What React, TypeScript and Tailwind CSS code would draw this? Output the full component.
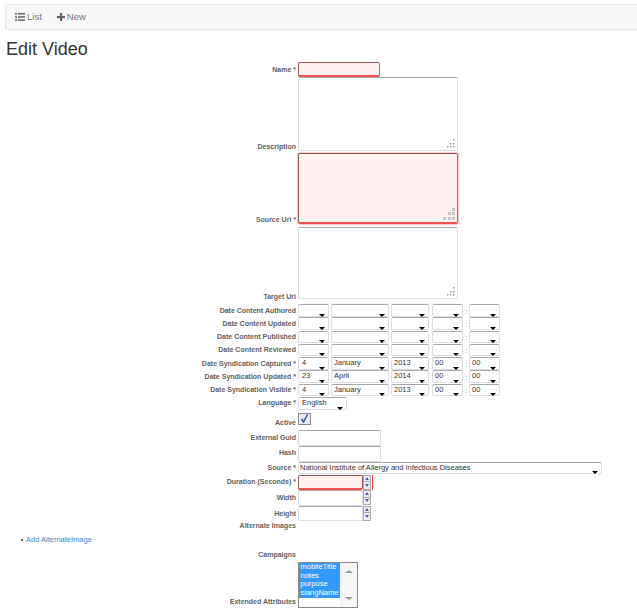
import { ReactNode } from "react";

const days = ["", "", "", "", "4", "23", "4"];
const months = ["", "", "", "", "January", "April", "January"];
const years = ["", "", "", "", "2013", "2014", "2013"];

const dateRows = [
  { label: "Date Content Authored", i: 0 },
  { label: "Date Content Updated", i: 1 },
  { label: "Date Content Published", i: 2 },
  { label: "Date Content Reviewed", i: 3 },
  { label: "Date Syndication Captured *", i: 4 },
  { label: "Date Syndication Updated *", i: 5 },
  { label: "Date Syndication Visible *", i: 6 },
];

// label column is fixed, field starts at x=298
const Row = ({
  label,
  className,
  labelClass,
  children,
}: {
  label: string;
  className?: string;
  labelClass?: string;
  children: ReactNode;
}) => (
  <div className={`flex items-end ${className ?? ""}`}>
    <label
      className={`w-[296.5px] shrink-0 pr-[0.5px] text-right text-[7px] leading-[10px] font-bold text-[#5f5f5f] ${
        labelClass ?? "pb-[1px]"
      }`}
    >
      {label}
    </label>
    <div className="ml-[1.5px] flex items-end">{children}</div>
  </div>
);

const FakeSelect = ({ value, className }: { value?: string; className: string }) => (
  <div
    className={`relative h-[12.5px] rounded-[2px] border border-[#dcdce4] border-t-[#a9a9a9] bg-white text-[7.5px] leading-[9px] text-[#333] ${className}`}
  >
    {value}
    <span className="absolute right-[3px] bottom-[-1px] h-0 w-0 border-x-[3.5px] border-t-[3px] border-x-transparent border-t-black" />
  </div>
);

const TextArea = ({ invalid, className }: { invalid?: boolean; className: string }) => (
  <div
    className={`relative w-[160px] rounded-[2px] border ${
      invalid
        ? "border-[#8f5a5a] border-r-[#f05050] border-b-2 border-b-[#f05050] bg-[#fff2f0] shadow-[0_0_1px_1px_#fbc4c4]"
        : "border-[#dcdce4] border-t-[#a9a9a9] bg-white"
    } ${className}`}
  >
    {invalid ? (
      <svg className="absolute right-[1px] bottom-[1px]" width="14" height="14" viewBox="0 0 14 14">
        <g fill="#c8c8c8">
          <rect x="10" y="1" width="3" height="3" />
          <rect x="6" y="5" width="3" height="3" />
          <rect x="10" y="5" width="3" height="3" />
          <rect x="1" y="10" width="3" height="3" />
          <rect x="6" y="10" width="3" height="3" />
          <rect x="10" y="10" width="3" height="3" />
        </g>
      </svg>
    ) : (
      <svg className="absolute right-[1px] bottom-[1px]" width="11" height="11" viewBox="0 0 11 11">
        <g fill="#9a9a9a">
          <rect x="8" y="1" width="1.5" height="1.5" />
          <rect x="5" y="5" width="1.5" height="1.5" />
          <rect x="8" y="5" width="1.5" height="1.5" />
          <rect x="2" y="8" width="1.5" height="1.5" />
          <rect x="5" y="8" width="1.5" height="1.5" />
          <rect x="8" y="8" width="1.5" height="1.5" />
        </g>
      </svg>
    )}
  </div>
);

const Spinner = () => (
  <div className="flex h-[15px] w-[8px] flex-col border border-[#a9a9a9] bg-[#eeeef4]">
    <span className="flex h-1/2 items-center justify-center border-b border-[#a9a9a9]">
      <span className="h-0 w-0 border-x-[2.5px] border-b-[3px] border-x-transparent border-b-[#5060a8]" />
    </span>
    <span className="flex h-1/2 items-center justify-center">
      <span className="h-0 w-0 border-x-[2.5px] border-t-[3px] border-x-transparent border-t-[#5060a8]" />
    </span>
  </div>
);

const NumberField = ({ invalid }: { invalid?: boolean }) => (
  <div className="flex items-start">
    <div
      className={`h-[15.5px] w-[65px] rounded-[2px] border ${
        invalid
          ? "border-[#8f5a5a] border-b-2 border-b-[#f05050] bg-[#fff2f0]"
          : "border-[#dcdce4] border-t-[#a9a9a9] bg-white"
      }`}
    />
    <Spinner />
    {invalid && <span className="ml-[1px] h-[15px] w-[1px] bg-[#f05050]" />}
  </div>
);

export default function App() {
  return (
    <div className="h-[608px] w-[637px] overflow-hidden bg-white font-['Liberation_Sans',Arial,sans-serif]">
      {/* Nav bar */}
      <div className="pt-1 pl-[5px]">
        <nav className="flex h-[26px] items-center rounded-l-[3px] border border-r-0 border-[#e7e7e7] bg-[#f8f8f8] pl-[9px] text-[9.5px] text-[#777]">
          <a className="flex items-center gap-[2px]">
            <svg width="10" height="8" viewBox="0 0 10 8" fill="#666">
              <rect x="0" y="0" width="2" height="1.5" />
              <rect x="3" y="0" width="7" height="1.5" />
              <rect x="0" y="3.2" width="2" height="1.5" />
              <rect x="3" y="3.2" width="7" height="1.5" />
              <rect x="0" y="6.4" width="2" height="1.5" />
              <rect x="3" y="6.4" width="7" height="1.5" />
            </svg>
            List
          </a>
          <a className="ml-[15px] flex items-center gap-[2px]">
            <svg width="8" height="8" viewBox="0 0 8 8" fill="#666">
              <rect x="3" y="0" width="2.2" height="8" />
              <rect x="0" y="3" width="8" height="2.2" />
            </svg>
            New
          </a>
        </nav>
      </div>

      <h1 className="mt-[9px] ml-[6px] text-[18px] leading-[20px] font-normal text-[#333]">Edit Video</h1>

      {/* Form */}
      <form className="mt-[3px] flex flex-col">
        <Row label="Name *" labelClass="pb-[2px]">
          <div className="h-[15px] w-[82px] rounded-[2px] border border-[#8f5a5a] border-r-[#f05050] border-b-2 border-b-[#f05050] bg-[#fff2f0]" />
        </Row>
        <Row label="Description" labelClass="mb-[-1px]">
          <TextArea className="h-[74px]" />
        </Row>
        <Row label="Source Uri *" className="mt-[2px]" labelClass="mb-[-1px]">
          <TextArea invalid className="h-[71px]" />
        </Row>
        <Row label="Target Uri" className="mt-[3px]" labelClass="mb-[-3px]">
          <TextArea className="h-[72px]" />
        </Row>

        <div className="mt-[5px] flex flex-col gap-[0.8px]">
          {dateRows.map(({ label, i }) => (
            <Row key={label} label={label}>
              <FakeSelect value={days[i]} className="w-[31px] pl-[3px]" />
              <FakeSelect value={months[i]} className="ml-[2px] w-[58px] pl-[2px]" />
              <FakeSelect value={years[i]} className="ml-[2px] w-[38px] pl-[2px]" />
              <FakeSelect value={i > 3 ? "00" : ""} className="ml-[3px] w-[31px] pl-[2px]" />
              <span className="w-[6px] text-center text-[8px] leading-[10px] text-[#7a9cc0]">:</span>
              <FakeSelect value={i > 3 ? "00" : ""} className="w-[31px] pl-[2px]" />
            </Row>
          ))}
          <Row label="Language *" labelClass="pb-[2px]">
            <FakeSelect value="English" className="w-[49px] pl-[3px]" />
          </Row>
        </div>

        <Row label="Active" className="mt-[3px]" labelClass="mb-[-3px]">
          <div className="flex h-[12px] w-[13px] items-center justify-center border border-[#8a8a8a] bg-[#e6e8f4]">
            <svg width="9" height="9" viewBox="0 0 9 9">
              <path d="M1.5 5 L3.5 8 L7.5 0.5" fill="none" stroke="#3a58a8" strokeWidth="1.5" />
            </svg>
          </div>
        </Row>
        <Row label="External Guid" className="mt-[5px]" labelClass="pb-[3px]">
          <div className="h-[16px] w-[83px] rounded-[2px] border border-[#dcdce4] border-t-[#a9a9a9] bg-white" />
        </Row>
        <Row label="Hash" labelClass="pb-[4px]">
          <div className="h-[16px] w-[83px] rounded-[2px] border border-[#dcdce4] border-t-[#a9a9a9] bg-white" />
        </Row>
        <Row label="Source *">
          <FakeSelect value="National Institute of Allergy and Infectious Diseases" className="w-[304px] pl-[1px]" />
        </Row>
        <Row label="Duration (Seconds) *" className="mt-[0.5px]" labelClass="pb-[3px]">
          <NumberField invalid />
        </Row>
        <Row label="Width" labelClass="pb-[3px]">
          <NumberField />
        </Row>
        <Row label="Height" labelClass="pb-[2px]">
          <NumberField />
        </Row>

        <Row label="Alternate Images" labelClass="pb-[2px]">
          <span />
        </Row>
        <ul className="mt-[2px] ml-[21px] h-[21px] text-[7.5px] leading-[10px] text-[#428bca]">
          <li className="flex items-center gap-[3.5px]">
            <span className="h-[1.5px] w-[1.5px] rounded-full bg-[#333]" />
            <a>Add AlternateImage</a>
          </li>
        </ul>
        <Row label="Campaigns" className="h-[5px]">
          <span />
        </Row>
        <Row label="Extended Attributes" className="mt-[1px]">
          <div className="flex h-[46px] w-[60px] border-[1.5px] border-[#8a8a8a] bg-white">
            <ul className="w-[41px] text-[7.5px] leading-[8.7px] text-white">
              {["mobileTitle", "notes", "purpose", "slangName"].map((o) => (
                <li key={o} className="bg-[#3399ff] pl-[1.5px]">
                  {o}
                </li>
              ))}
            </ul>
            <div className="flex flex-1 flex-col items-center justify-between bg-[#f6f6f6] py-[7px]">
              <span className="h-0 w-0 border-x-[4px] border-b-[3px] border-x-transparent border-b-[#999]" />
              <span className="h-0 w-0 border-x-[4px] border-t-[3px] border-x-transparent border-t-[#999]" />
            </div>
          </div>
        </Row>
      </form>
    </div>
  );
}
